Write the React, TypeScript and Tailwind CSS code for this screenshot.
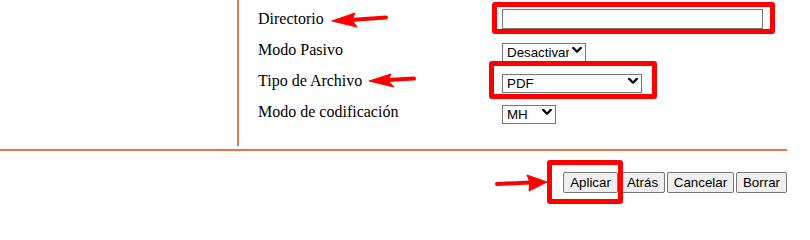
import React from "react";

function Chevron() {
  return (
    <svg width="10" height="7" viewBox="0 0 10 7" className="pointer-events-none absolute right-[4px] top-1/2 -translate-y-1/2">
      <path d="M1.2 1.4 L5 5.2 L8.8 1.4" fill="none" stroke="#000" strokeWidth="2.2" strokeLinecap="round" strokeLinejoin="round" />
    </svg>
  );
}

function Sel({ w, value, options }: { w: string; value: string; options: string[] }) {
  return (
    <div className={`relative h-[19px] ${w}`}>
      <select
        defaultValue={value}
        className="h-full w-full appearance-none border border-[#767676] bg-white pl-[4px] pr-[16px] text-[13.33px] leading-[17px] text-black outline-none"
        style={{ fontFamily: '"Liberation Sans", Arial, sans-serif' }}
      >
        {options.map((o) => (
          <option key={o}>{o}</option>
        ))}
      </select>
      <Chevron />
    </div>
  );
}

const btn =
  "h-[21px] rounded-[2px] border border-[#767676] bg-[#efefef] px-0 text-[13.33px] leading-[19px] text-black";

export default function App() {
  const serif = { fontFamily: '"Liberation Serif", "Times New Roman", serif' };
  const sans = { fontFamily: '"Liberation Sans", Arial, sans-serif' };
  return (
    <div className="relative h-[205px] w-[810px] overflow-hidden bg-white">
      <div className="w-[787px]">
        <div className="flex h-[146px]">
          <div className="w-[239px] border-r-2 border-[#e07a50]" />
          <div className="pl-[19px] pt-[3px]">
            <div className="grid grid-cols-[244px_auto] text-[16px] text-black" style={serif}>
              <div className="flex h-[31px] items-center">Directorio</div>
              <div className="flex h-[31px] items-center">
                <input className="h-[20px] w-[261px] border border-[#767676] bg-white outline-none" style={sans} />
              </div>
              <div className="flex h-[31px] items-center">Modo Pasivo</div>
              <div className="flex h-[31px] items-center">
                <Sel w="w-[84px]" value="Desactivar" options={["Desactivar", "Activar"]} />
              </div>
              <div className="flex h-[31px] items-center">Tipo de Archivo</div>
              <div className="flex h-[31px] items-center">
                <Sel w="w-[140px]" value="PDF" options={["PDF", "TIFF", "JPEG"]} />
              </div>
              <div className="flex h-[31px] items-center">Modo de codificación</div>
              <div className="flex h-[31px] items-center">
                <Sel w="w-[54px]" value="MH" options={["MH", "MR", "MMR"]} />
              </div>
            </div>
          </div>
        </div>
        <div className="mt-[3px] h-[2px] bg-[#ea7446]" />
        <div className="flex justify-end gap-[2px] pt-[21px]" style={sans}>
          <button className={`${btn} w-[55px]`}>Aplicar</button>
          <button className={`${btn} w-[45px]`}>Atrás</button>
          <button className={`${btn} w-[67px]`}>Cancelar</button>
          <button className={`${btn} w-[51px]`}>Borrar</button>
        </div>
      </div>

      {/* annotation overlays */}
      <div className="pointer-events-none absolute left-[492px] top-[2px] h-[32px] w-[283px] rounded-[3px] border-[5px] border-[#ff0000]" />
      <div className="pointer-events-none absolute left-[489px] top-[61px] h-[38px] w-[168px] rounded-[3px] border-[5px] border-[#ff0000]" />
      <div className="pointer-events-none absolute left-[547px] top-[160px] h-[44px] w-[76px] rounded-[3px] border-[5px] border-[#ff0000]" />
      <svg className="pointer-events-none absolute left-0 top-0" width="810" height="205" viewBox="0 0 810 205">
        <g fill="#ff0000" stroke="#ff0000" strokeLinejoin="round">
          <line x1="350" y1="20" x2="386" y2="17.5" strokeWidth="4" strokeLinecap="round" />
          <polygon points="332,21 355,13 352,20 357,27" strokeWidth="1" />
          <line x1="388" y1="80" x2="414" y2="78.5" strokeWidth="4" strokeLinecap="round" />
          <polygon points="369,81 391,74 388,80.5 394,87" strokeWidth="1" />
          <line x1="497" y1="184" x2="530" y2="182.5" strokeWidth="4" strokeLinecap="round" />
          <polygon points="547,182 527,175 530,182.5 529,191" strokeWidth="1" />
        </g>
      </svg>
    </div>
  );
}
